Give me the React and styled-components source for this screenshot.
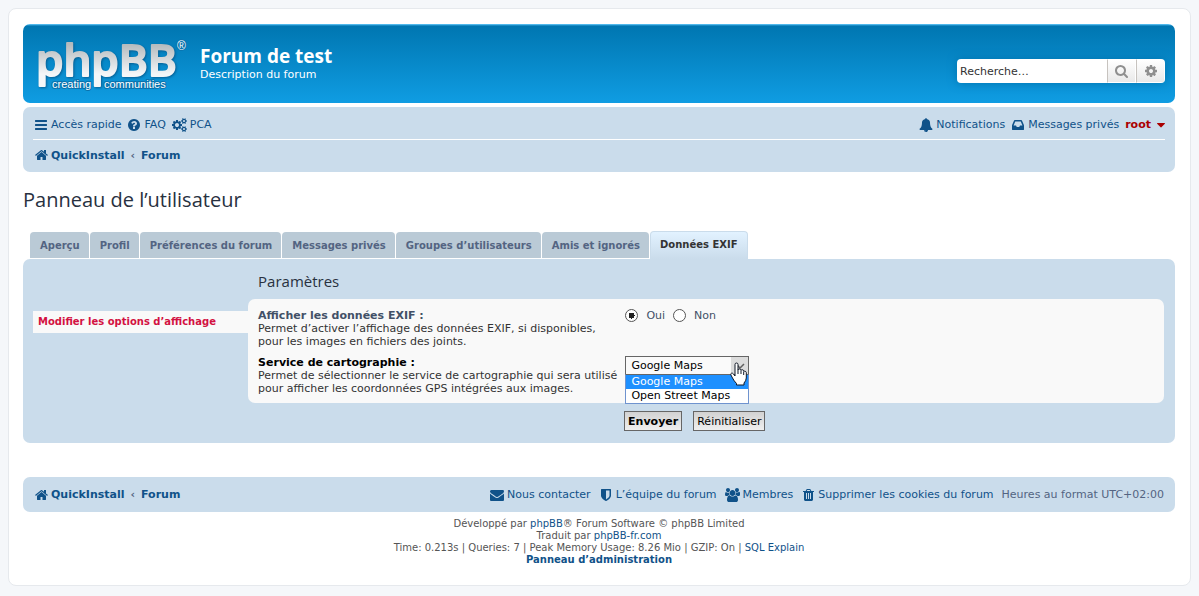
import styled, { createGlobalStyle } from "styled-components";

const ICONS = {
  bars: {
    width: 1536,
    minX: 128,
    d: "M1664 1344v128q0 26-19 45t-45 19h-1408q-26 0-45-19t-19-45v-128q0-26 19-45t45-19h1408q26 0 45 19t19 45zm0-512v128q0 26-19 45t-45 19h-1408q-26 0-45-19t-19-45v-128q0-26 19-45t45-19h1408q26 0 45 19t19 45zm0-512v128q0 26-19 45t-45 19h-1408q-26 0-45-19t-19-45v-128q0-26 19-45t45-19h1408q26 0 45 19t19 45z",
  },
  question: {
    width: 1536,
    minX: 128,
    d: "M1024 1376v-192q0-14-9-23t-23-9h-192q-14 0-23 9t-9 23v192q0 14 9 23t23 9h192q14 0 23-9t9-23zm256-672q0-88-55.500-163t-138.500-116-170-41q-243 0-371 213-15 24 8 42l132 100q7 6 19 6 16 0 25-12 53-68 86-92 34-24 86-24 48 0 85.500 26t37.500 59q0 38-20 61t-68 45q-63 28-115.500 86.500t-52.500 125.500v36q0 14 9 23t23 9h192q14 0 23-9t9-23q0-19 21.500-49.500t54.500-49.500q32-18 49-28.500t46-35 44.500-48 28-60.500 12.500-81zm384 192q0 209-103 385.500t-279.500 279.500-385.500 103-385.500-103-279.500-279.500-103-385.500 103-385.500 279.500-279.500 385.500-103 385.500 103 279.500 279.500 103 385.500z",
  },
  cogs: {
    width: 1920,
    minX: 0,
    d: "M896 896q0-106-75-181t-181-75-181 75-75 181 75 181 181 75 181-75 75-181zm768 512q0-52-38-90t-90-38-90 38-38 90q0 53 37.500 90.500t90.500 37.500 90.500-37.500 37.500-90.500zm0-1024q0-52-38-90t-90-38-90 38-38 90q0 53 37.500 90.500t90.500 37.500 90.500-37.500 37.500-90.500zm-384 421v185q0 10-7 19.500t-16 10.500l-155 24q-11 35-32 76 34 48 90 115 7 11 7 20 0 12-7 19-23 30-82.500 89.500t-78.500 59.500q-11 0-21-7l-115-90q-37 19-77 31-11 108-23 155-7 24-30 24h-186q-11 0-20-7.500t-10-17.500l-23-153q-34-10-75-31l-118 89q-7 7-20 7-11 0-21-8-144-133-144-160 0-9 7-19 10-14 41-53t47-61q-23-44-35-82l-152-24q-10-1-17-9.500t-7-19.500v-185q0-10 7-19.500t16-10.500l155-24q11-35 32-76-34-48-90-115-7-11-7-20 0-12 7-20 22-30 82-89t79-59q11 0 21 7l115 90q34-18 77-32 11-108 23-154 7-24 30-24h186q11 0 20 7.500t10 17.500l23 153q34 10 75 31l118-89q8-7 20-7 11 0 21 8 144 133 144 160 0 8-7 19-12 16-42 54t-45 60q23 48 34 82l152 23q10 2 17 10.500t7 19.500zm640 533v140q0 16-149 31-12 27-30 52 51 113 51 138 0 4-4 7-122 71-124 71-8 0-46-47t-52-68q-20 2-30 2t-30-2q-14 21-52 68t-46 47q-2 0-124-71-4-3-4-7 0-25 51-138-18-25-30-52-149-15-149-31v-140q0-16 149-31 13-29 30-52-51-113-51-138 0-4 4-7 4-2 35-20t59-34 30-16q8 0 46 46.500t52 67.500q20-2 30-2t30 2q51-71 92-112l6-2q4 0 124 70 4 3 4 7 0 25-51 138 17 23 30 52 149 15 149 31zm0-1024v140q0 16-149 31-12 27-30 52 51 113 51 138 0 4-4 7-122 71-124 71-8 0-46-47t-52-68q-20 2-30 2t-30-2q-14 21-52 68t-46 47q-2 0-124-71-4-3-4-7 0-25 51-138-18-25-30-52-149-15-149-31v-140q0-16 149-31 13-29 30-52-51-113-51-138 0-4 4-7 4-2 35-20t59-34 30-16q8 0 46 46.500t52 67.500q20-2 30-2t30 2q51-71 92-112l6-2q4 0 124 70 4 3 4 7 0 25-51 138 17 23 30 52 149 15 149 31z",
  },
  home: {
    width: 1664,
    minX: 64,
    d: "M1472 992v480q0 26-19 45t-45 19h-384v-384h-256v384h-384q-26 0-45-19t-19-45v-480q0-1 .5-3t.5-3l575-474 575 474q1 2 1 6zm223-69l-62 74q-8 9-21 11h-3q-13 0-21-7l-692-577-692 577q-12 8-24 7-13-2-21-11l-62-74q-8-10-7-23.500t11-21.500l719-599q32-26 76-26t76 26l244 204v-195q0-14 9-23t23-9h192q14 0 23 9t9 23v408l219 182q10 8 11 21.500t-7 23.500z",
  },
  bell: {
    width: 1792,
    minX: 0,
    d: "M912 1696q0-16-16-16-59 0-101.500-42.500t-42.500-101.500q0-16-16-16t-16 16q0 73 51.500 124.500t124.500 51.500q16 0 16-16zm816-288q0 52-38 90t-90 38h-448q0 106-75 181t-181 75-181-75-75-181h-448q-52 0-90-38t-38-90q50-42 91-88t85-119.500 74.500-158.500 50-206 19.500-260q0-152 117-282.500t307-158.500q-8-19-8-39 0-40 28-68t68-28 68 28 28 68q0 20-8 39 190 28 307 158.500t117 282.500q0 139 19.500 260t50 206 74.500 158.500 85 119.500 91 88z",
  },
  inbox: {
    width: 1536,
    minX: 128,
    d: "M1151 960h316q-1-3-2.500-8.500t-2.500-7.500l-212-496h-708l-212 496q-1 3-2.500 8.500t-2.500 7.500h316l95 192h320zm513 30v482q0 26-19 45t-45 19h-1408q-26 0-45-19t-19-45v-482q0-62 25-123l238-552q10-25 36.500-42t52.500-17h832q26 0 52.500 17t36.500 42l238 552q25 61 25 123z",
  },
  caret: {
    width: 1024,
    minX: 384,
    d: "M1408 704q0 26-19 45l-448 448q-19 19-45 19t-45-19l-448-448q-19-19-19-45t19-45 45-19h896q26 0 45 19t19 45z",
  },
  search: {
    width: 1664,
    minX: 64,
    d: "M1216 832q0-185-131.500-316.500t-316.500-131.500-316.500 131.500-131.500 316.500 131.500 316.500 316.500 131.500 316.500-131.500 131.500-316.500zm512 832q0 52-38 90t-90 38q-54 0-90-38l-343-342q-179 124-399 124-143 0-273.500-55.500t-225-150-150-225-55.500-273.500 55.500-273.500 150-225 225-150 273.500-55.500 273.500 55.500 225 150 150 225 55.500 273.500q0 220-124 399l343 343q37 37 37 90z",
  },
  cog: {
    width: 1536,
    minX: 128,
    d: "M1152 896q0-106-75-181t-181-75-181 75-75 181 75 181 181 75 181-75 75-181zm512-109v222q0 12-8 23t-20 13l-185 28q-19 54-39 91 35 50 107 138 10 12 10 25t-9 23q-27 37-99 108t-94 71q-12 0-26-9l-138-108q-44 23-91 38-16 136-29 186-7 28-36 28h-222q-14 0-24.500-8.500t-11.500-21.500l-28-184q-49-16-90-37l-141 107q-10 9-25 9-14 0-25-11-126-114-165-168-7-10-7-23 0-12 8-23 15-21 51-66.500t54-70.500q-27-50-41-99l-183-27q-13-2-21-12.500t-8-23.500v-222q0-12 8-23t19-13l186-28q14-46 39-92-40-57-107-138-10-12-10-24 0-10 9-23 26-36 98.500-107.500t94.500-71.500q13 0 26 10l138 107q44-23 91-38 16-136 29-186 7-28 36-28h222q14 0 24.500 8.500t11.500 21.500l28 184q49 16 90 37l142-107q9-9 24-9 13 0 25 10 129 119 165 170 7 8 7 22 0 12-8 23-15 21-51 66.500t-54 70.500q26 50 41 98l183 28q13 2 21 12.500t8 23.500z",
  },
  envelope: {
    width: 1792,
    minX: 0,
    d: "M1792 710v794q0 66-47 113t-113 47h-1472q-66 0-113-47t-47-113v-794q44 49 101 87 362 246 497 345 57 42 92.500 65.500t94.500 48 110 24.500h2q51 0 110-24.500t94.500-48 92.500-65.500q170-123 498-345 57-39 100-87zm0-294q0 79-49 151t-122 123q-376 261-468 325-10 7-42.500 30.500t-54 38-52 32.500-57.500 27-50 9h-2q-23 0-50-9t-57.500-27-52-32.500-54-38-42.500-30.500q-91-64-262-182.500t-205-142.500q-62-42-117-115.500t-55-136.500q0-78 41.500-130t118.500-52h1472q65 0 112.500 47t47.500 113z",
  },
  shield: {
    width: 1280,
    minX: 256,
    d: "M1344 960v-640h-448v1137q119-63 213-137 235-184 235-360zm192-768v768q0 86-33.500 170.500t-83 150-118 127.500-126.500 103-121 77.500-89.500 49.500-42.500 20q-12 6-26 6t-26-6q-16-7-42.500-20t-89.500-49.500-121-77.500-126.500-103-118-127.500-83-150-33.500-170.500v-768q0-26 19-45t45-19h1152q26 0 45 19t19 45z",
  },
  users: {
    width: 1920,
    minX: 0,
    d: "M593 896q-162 5-265 128h-134q-82 0-138-40.500t-56-118.500q0-353 124-353 6 0 43.500 21t97.500 42.500 119 21.500q67 0 133-23-5 37-5 66 0 159 93 293zm1071 637q0 120-73 189.500t-194 69.500h-874q-121 0-194-69.500t-73-189.500q0-53 3.500-103.500t14-109 26.500-108.500 43-97.500 62-81 85.500-53.500 111.500-20q10 0 43 21.500t73 48 107 48 135 21.500 135-21.500 107-48 73-48 43-21.500q61 0 111.500 20t85.500 53.500 62 81 43 97.500 26.500 108.500 14 109 3.500 103.500zm-1024-1277q0 106-75 181t-181 75-181-75-75-181 75-181 181-75 181 75 75 181zm704 384q0 159-112.500 271.500t-271.500 112.500-271.500-112.500-112.500-271.500 112.500-271.500 271.500-112.500 271.500 112.500 112.500 271.500zm576 225q0 78-56 118.500t-138 40.500h-134q-103-123-265-128 93-134 93-293 0-29-5-66 66 23 133 23 59 0 119-21.500t97.500-42.500 43.500-21q124 0 124 353zm-128-609q0 106-75 181t-181 75-181-75-75-181 75-181 181-75 181 75 75 181z",
  },
  trash: {
    width: 1408,
    minX: 192,
    d: "M704 1376v-704q0-14-9-23t-23-9h-64q-14 0-23 9t-9 23v704q0 14 9 23t23 9h64q14 0 23-9t9-23zm256 0v-704q0-14-9-23t-23-9h-64q-14 0-23 9t-9 23v704q0 14 9 23t23 9h64q14 0 23-9t9-23zm256 0v-704q0-14-9-23t-23-9h-64q-14 0-23 9t-9 23v704q0 14 9 23t23 9h64q14 0 23-9t9-23zm-544-992h448l-48-117q-7-9-17-11h-317q-10 2-17 11zm928 32v64q0 14-9 23t-23 9h-96v948q0 83-47 143.500t-113 60.500h-832q-66 0-113-58.500t-47-141.500v-952h-96q-14 0-23-9t-9-23v-64q0-14 9-23t23-9h309l70-167q15-37 54-63t79-26h320q40 0 79 26t54 63l70 167h309q14 0 23 9t9 23z",
  },
};

const TABS = [
  "Aperçu",
  "Profil",
  "Préférences du forum",
  "Messages privés",
  "Groupes d’utilisateurs",
  "Amis et ignorés",
  "Données EXIF",
];

const SERVICES = ["Google Maps", "Open Street Maps"];

export default function App() {
  return (
    <>
      <GlobalStyle />
      <Wrap>
        <Header />
        <NavBar />
        <main>
          <PageTitle>Panneau de l’utilisateur</PageTitle>
          <Tabs>
            {TABS.map((tab) => (
              <Tab key={tab} href="#" $active={tab === "Données EXIF"}>
                {tab}
              </Tab>
            ))}
          </Tabs>
          <Panel>
            <SideMenu>
              <SideLink href="#">Modifier les options d’affichage</SideLink>
            </SideMenu>
            <SettingsForm />
          </Panel>
        </main>
        <Footer />
      </Wrap>
    </>
  );
}

function Icon({ name }) {
  const { width, minX, d } = ICONS[name];
  return (
    <IconBox aria-hidden="true" $narrow={name === "caret"}>
      <svg
        width={(width * 14) / 1792}
        height="14"
        viewBox={`${minX} 0 ${width} 1792`}
        fill="currentColor"
      >
        <path d={d} />
      </svg>
    </IconBox>
  );
}

function Logo() {
  return (
    <LogoSvg viewBox="0 0 149 52" role="img" aria-label="phpBB">
      <defs>
        <linearGradient id="silver" x1="0" y1="0" x2="0" y2="1">
          <stop offset="0.25" stopColor="#b4babd" />
          <stop offset="0.75" stopColor="#f4f6f8" />
        </linearGradient>
      </defs>
      <Wordmark
        x="-2"
        y="37"
        fill="url(#silver)"
        stroke="url(#silver)"
        strokeWidth="2"
        strokeLinejoin="round"
      >
        phpBB
      </Wordmark>
      <g
        fontFamily="'Liberation Sans', Arial, sans-serif"
        fontSize="11"
        fill="#ffffff"
        stroke="#0a72ad"
        strokeWidth="2"
        paintOrder="stroke"
      >
        <text x="14" y="49">creating</text>
        <text x="66" y="49">communities</text>
        <text x="139" y="11" fontSize="12">®</text>
      </g>
    </LogoSvg>
  );
}

function Header() {
  return (
    <HeaderBar>
      <Brand>
        <a href="#">
          <Logo />
        </a>
        <div>
          <SiteName>Forum de test</SiteName>
          <SiteDescription>Description du forum</SiteDescription>
        </div>
      </Brand>
      <SearchBox role="search">
        <SearchInput
          type="search"
          aria-label="Recherche"
          placeholder="Recherche…"
        />
        <SearchButton type="button" aria-label="Rechercher">
          <Icon name="search" />
        </SearchButton>
        <SearchButton type="button" aria-label="Recherche avancée">
          <Icon name="cog" />
        </SearchButton>
      </SearchBox>
    </HeaderBar>
  );
}

function NavBar() {
  return (
    <NavBox>
      <NavRow $divided>
        <NavGroup>
          <NavLink href="#">
            <Icon name="bars" />
            Accès rapide
          </NavLink>
          <NavLink href="#">
            <Icon name="question" />
            FAQ
          </NavLink>
          <NavLink href="#">
            <Icon name="cogs" />
            PCA
          </NavLink>
        </NavGroup>
        <NavGroup>
          <NavLink href="#">
            <Icon name="bell" />
            Notifications
          </NavLink>
          <NavLink href="#">
            <Icon name="inbox" />
            Messages privés
          </NavLink>
          <UserLink href="#">
            root
            <Icon name="caret" />
          </UserLink>
        </NavGroup>
      </NavRow>
      <NavRow>
        <Breadcrumbs />
      </NavRow>
    </NavBox>
  );
}

function Breadcrumbs() {
  return (
    <Crumbs>
      <NavLink href="#">
        <Icon name="home" />
        QuickInstall
      </NavLink>
      <span>‹</span>
      <NavLink href="#">Forum</NavLink>
    </Crumbs>
  );
}

function SettingsForm() {
  return (
    <Form onSubmit={(e) => e.preventDefault()}>
      <FormTitle>Paramètres</FormTitle>
      <Fields>
        <Field>
          <div>
            <FieldName id="exif-label">Afficher les données EXIF :</FieldName>
            <Hint>
              Permet d’activer l’affichage des données EXIF, si disponibles,
              <br />
              pour les images en fichiers des joints.
            </Hint>
          </div>
          <Radios role="radiogroup" aria-labelledby="exif-label">
            <label>
              <Radio name="exif" defaultChecked />
              Oui
            </label>
            <label>
              <Radio name="exif" />
              Non
            </label>
          </Radios>
        </Field>
        <Field>
          <div>
            <FieldName as="label" htmlFor="service" $hovered>
              Service de cartographie :
            </FieldName>
            <Hint>
              Permet de sélectionner le service de cartographie qui sera utilisé
              <br />
              pour afficher les coordonnées GPS intégrées aux images.
            </Hint>
          </div>
          <SelectWrapper>
            <Select id="service" defaultValue={SERVICES[0]}>
              {SERVICES.map((name) => (
                <option key={name}>{name}</option>
              ))}
            </Select>
            <Arrow>
              <svg width="10" height="6" viewBox="0 0 10 6" fill="none">
                <path d="M1 1l4 4 4-4" stroke="#606060" strokeWidth="1.500" />
              </svg>
            </Arrow>
            <Options role="listbox" aria-label="Service de cartographie">
              {SERVICES.map((name, i) => (
                <Option
                  key={name}
                  role="option"
                  aria-selected={i === 0}
                  $selected={i === 0}
                >
                  {name}
                </Option>
              ))}
            </Options>
            <HandCursor />
          </SelectWrapper>
        </Field>
      </Fields>
      <Buttons>
        <Button type="submit" $primary>
          Envoyer
        </Button>
        <Button type="reset">Réinitialiser</Button>
      </Buttons>
    </Form>
  );
}

function HandCursor() {
  return (
    <Hand width="17" height="24" viewBox="0 0 17 24" aria-hidden="true">
      <path
        d="M5 14V2.500Q5 1 6.500 1T8 2.500V8Q8 7 9.500 7T11 8.500Q11 7.700 12.300 7.700T13.700 9.500Q14 9 15 9.200T16.300 10.500V16Q16 19 14 21V23H6.500V21.500Q4 19 2.500 16L.8 12.800Q.5 11.500 1.600 11.200T3.500 12z"
        fill="#ffffff"
        stroke="#111827"
      />
      <path d="M8 8v4M11 9v3M13.700 10v3" stroke="#111827" fill="none" />
    </Hand>
  );
}

function Footer() {
  return (
    <footer>
      <FooterBar>
        <Breadcrumbs />
        <FooterGroup>
          <NavLink href="#">
            <Icon name="envelope" />
            Nous contacter
          </NavLink>
          <NavLink href="#">
            <Icon name="shield" />
            L’équipe du forum
          </NavLink>
          <NavLink href="#">
            <Icon name="users" />
            Membres
          </NavLink>
          <NavLink href="#">
            <Icon name="trash" />
            Supprimer les cookies du forum
          </NavLink>
          <span>Heures au format UTC+02:00</span>
        </FooterGroup>
      </FooterBar>
      <Copyright>
        <div>
          Développé par <a href="#">phpBB</a>® Forum Software © phpBB Limited
        </div>
        <div>
          Traduit par <a href="#">phpBB-fr.com</a>
        </div>
        <div>
          Time: 0.213s | Queries: 7 | Peak Memory Usage: 8.26 Mio | GZIP: On |{" "}
          <a href="#">SQL Explain</a>
        </div>
        <div>
          <strong>
            <a href="#">Panneau d’administration</a>
          </strong>
        </div>
      </Copyright>
    </footer>
  );
}

const GlobalStyle = createGlobalStyle`
  * {
    box-sizing: border-box;
  }
  body {
    margin: 0;
    padding: 8px;
    background-color: #f5f7fa;
    color: #536482;
    font-family: Verdana, "DejaVu Sans", sans-serif;
    font-size: 11px;
    line-height: 13px;
  }
  a {
    color: #105289;
    text-decoration: none;
  }
  input, select, button {
    font-family: inherit;
    font-size: 11px;
  }
`;

const Wrap = styled.div`
  max-width: 1183px;
  margin: 0 auto;
  padding: 15px 15px 14px 14px;
  background-color: #ffffff;
  border: 1px solid #e6e9ed;
  border-radius: 8px;
`;

const IconBox = styled.span`
  display: inline-flex;
  justify-content: center;
  min-width: ${({ $narrow }) => ($narrow ? "8px" : "14px")};
`;

const HeaderBar = styled.header`
  display: flex;
  justify-content: space-between;
  align-items: center;
  height: 79px;
  margin-bottom: 4px;
  padding: 2px 10px 0 15px;
  color: #ffffff;
  background: linear-gradient(to bottom, #6aceff 0, #0076b1 2px, #12a3eb 92px);
  border-radius: 7px;
`;

const Brand = styled.div`
  display: flex;
  align-items: center;
  gap: 13px;
`;

const LogoSvg = styled.svg`
  display: block;
  width: 149px;
  height: 52px;
  overflow: visible;
`;

const Wordmark = styled.text`
  font-family: "Open Sans", sans-serif;
  font-size: 44px;
  font-weight: 600;
  filter: drop-shadow(1px 1px 1px #075f94);
`;

const SiteName = styled.h1`
  margin: 0;
  font-family: "Trebuchet MS", "Open Sans", sans-serif;
  font-size: 19px;
  font-weight: bold;
  line-height: 24px;
`;

const SiteDescription = styled.p`
  margin: 0 0 4px;
`;

const SearchBox = styled.form`
  display: flex;
  height: 24px;
  margin-top: 13px;
  overflow: hidden;
  border-radius: 4px;
  box-shadow: 0 0 10px #0075b0;
`;

const SearchInput = styled.input`
  width: 150px;
  padding: 3px;
  border: none;
  background-color: #ffffff;
  color: #333333;
  &::placeholder {
    color: #333333;
  }
`;

const SearchButton = styled.button`
  display: flex;
  justify-content: center;
  align-items: center;
  width: 29px;
  padding: 0;
  border: 1px solid #ffffff;
  border-left: 1px solid #c7c3bf;
  background: linear-gradient(to bottom, #ffffff, #e9e9e9);
  color: #8f8f8f;
`;

const NavBox = styled.nav`
  padding: 3px 10px 2px;
  background-color: #cadceb;
  border-radius: 7px;
`;

const NavRow = styled.div`
  display: flex;
  justify-content: space-between;
  align-items: center;
  height: 30px;
  padding-left: 1px;
  border-bottom: ${({ $divided }) => ($divided ? "1px solid #ffffff" : "none")};
`;

const NavGroup = styled.div`
  display: flex;
  align-items: center;
  gap: 6px;
`;

const FooterGroup = styled(NavGroup)`
  gap: 8px;
`;

const NavLink = styled.a`
  display: flex;
  align-items: center;
  gap: 3px;
`;

const UserLink = styled(NavLink)`
  gap: 6px;
  color: #aa0000;
  font-weight: bold;
`;

const Crumbs = styled.div`
  display: flex;
  align-items: center;
  gap: 6px;
  font-weight: bold;
`;

const PageTitle = styled.h2`
  margin: 16px 0 19px;
  color: #28313f;
  font-family: "Trebuchet MS", "Open Sans", sans-serif;
  font-size: 20px;
  font-weight: normal;
  line-height: 24px;
`;

const Tabs = styled.div`
  display: flex;
  align-items: flex-end;
  gap: 1px;
  padding-left: 7px;
`;

const Tab = styled.a`
  margin-bottom: ${({ $active }) => ($active ? "0" : "1px")};
  padding: ${({ $active }) => ($active ? "6px 9px 8px" : "7px 9px 6px 10px")};
  border: ${({ $active }) => ($active ? "1px solid #cadceb" : "none")};
  border-bottom: none;
  border-radius: 4px 4px 0 0;
  background: ${({ $active }) =>
    $active ? "linear-gradient(to bottom, #e2f2ff, #cadceb)" : "#bacad6"};
  color: ${({ $active }) => ($active ? "#333333" : "#536482")};
  font-size: 10px;
  font-weight: bold;
`;

const Panel = styled.div`
  display: flex;
  padding: 10px;
  background-color: #cadceb;
  border-radius: 7px;
`;

const SideMenu = styled.nav`
  flex: 0 0 19%;
  padding-top: 42px;
`;

const SideLink = styled.a`
  display: block;
  padding: 5px;
  background-color: #f9f9f9;
  color: #d31141;
  font-size: 10px;
  font-weight: bold;
  line-height: 12px;
`;

const Form = styled.form`
  flex: 1;
  padding-right: 1px;
`;

const FormTitle = styled.h3`
  margin: 0 0 6px 10px;
  color: #28313f;
  font-family: "Trebuchet MS", "Open Sans", sans-serif;
  font-size: 15px;
  font-weight: normal;
  line-height: 24px;
`;

const Fields = styled.div`
  display: flex;
  flex-direction: column;
  gap: 8px;
  padding: 10px 10px 8px;
  background-color: #f9f9f9;
  border-radius: 7px;
`;

const Field = styled.div`
  display: grid;
  grid-template-columns: 41% 1fr;
`;

const FieldName = styled.span`
  color: ${({ $hovered }) => ($hovered ? "#000000" : "#425067")};
  font-weight: bold;
`;

const Hint = styled.div`
  color: #333333;
  white-space: nowrap;
`;

const Radios = styled.div`
  display: flex;
  align-items: flex-start;
  gap: 8px;
  color: #425067;
  label {
    display: flex;
    align-items: center;
    gap: 8px;
  }
`;

const Radio = styled.input.attrs({ type: "radio" })`
  width: 13px;
  height: 13px;
  margin: 0;
  appearance: none;
  background-color: #ffffff;
  border: 1px solid #555555;
  border-radius: 50%;
  &:checked {
    background-image: radial-gradient(#222222 3px, #ffffff 3px);
  }
`;

const SelectWrapper = styled.div`
  position: relative;
  width: 124px;
`;

const Select = styled.select`
  display: block;
  width: 100%;
  height: 19px;
  padding: 0 5px;
  appearance: none;
  border: 1px solid #666666;
  border-radius: 0;
  background-color: #fafafa;
  color: #000000;
`;

const Arrow = styled.span`
  position: absolute;
  top: 1px;
  right: 1px;
  display: flex;
  justify-content: center;
  align-items: center;
  width: 17px;
  height: 17px;
  background-color: #dcdcdc;
  pointer-events: none;
`;

const Options = styled.div`
  position: absolute;
  top: 18px;
  left: 0;
  width: 100%;
  border: 1px solid #6f93cf;
  border-top-color: #666666;
  background-color: #ffffff;
  z-index: 3;
`;

const Option = styled.div`
  padding: 0 5px;
  background-color: ${({ $selected }) => ($selected ? "#1e90ff" : "#ffffff")};
  color: ${({ $selected }) => ($selected ? "#ffffff" : "#000000")};
  line-height: 14px;
`;

const Hand = styled.svg`
  position: absolute;
  top: 6px;
  right: 2px;
  z-index: 4;
`;

const Buttons = styled.div`
  display: flex;
  gap: 11px;
  margin: 8px 0 2px 376px;
`;

const Button = styled.button`
  height: 20px;
  padding: 0 3px;
  border: 1px solid #666666;
  background: linear-gradient(to bottom, #d2d2d2, #efefef);
  color: #000000;
  font-weight: ${({ $primary }) => ($primary ? "bold" : "normal")};
`;

const FooterBar = styled.div`
  display: flex;
  justify-content: space-between;
  align-items: center;
  height: 35px;
  margin-top: 34px;
  padding: 0 11px;
  background-color: #cadceb;
  border-radius: 7px;
`;

const Copyright = styled.div`
  padding: 6px 6px 5px;
  color: #555555;
  font-size: 10px;
  line-height: 12px;
  text-align: center;
`;
